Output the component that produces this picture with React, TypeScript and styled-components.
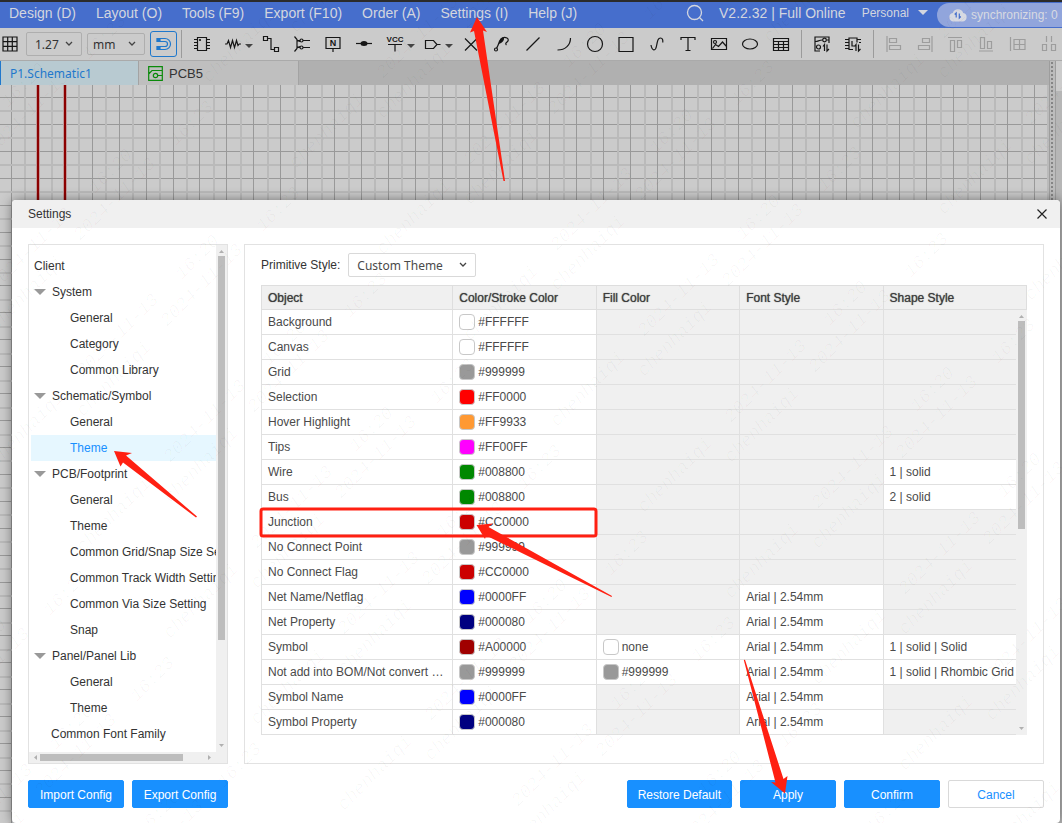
import React from "react";
import styled, { createGlobalStyle } from "styled-components";

const UI = `"Liberation Sans", Arial, sans-serif`;
const ALT = `"Noto Sans", "Open Sans", sans-serif`;
const BLUE = "#1890ff";
const RED = "#ff2012";

const GlobalStyle = createGlobalStyle`
  *, *::before, *::after { box-sizing: border-box; }
  body { margin: 0; font-family: ${UI}; font-size: 12px; color: #333; }
  button, select { font-family: inherit; font-size: inherit; color: inherit; }
  button { padding: 0; border: 0; background: none; cursor: pointer; }
  svg { display: block; flex: none; }
`;

const Page = styled.div`
  position: relative;
  display: flex;
  flex-direction: column;
  min-height: 100vh;
  overflow: hidden;
  background: #cbcbcb;
`;

/* ---------- menu bar ---------- */
const MenuBar = styled.header`
  display: flex;
  align-items: center;
  height: 28px;
  border-top: 2px solid #2b2b2b;
  padding: 0 0 5px 9px;
  background: #466ecc;
  color: #d3d6df;
  font-size: 14px;
  white-space: nowrap;
  overflow: hidden;
`;
const MenuList = styled.nav`
  display: flex;
  gap: 20px;
  flex: 1;
`;
const MenuButton = styled.button`
  line-height: 20px;
`;
const Version = styled.span`
  margin: 0 16px 0 15px;
`;
const Account = styled.button`
  display: flex;
  align-items: center;
  gap: 9px;
  margin-right: 9px;
  font-size: 12px;
`;
const SyncPill = styled.div`
  display: flex;
  align-items: center;
  gap: 4px;
  width: 125px;
  height: 24px;
  margin-top: 4px;
  padding: 1px 0 0 12px;
  border-radius: 12px 0 0 12px;
  background: #91a5dc;
  color: #d8dae2;
  font-size: 12px;
`;

/* ---------- tool bar ---------- */
const ToolBar = styled.div`
  display: flex;
  align-items: center;
  height: 33px;
  border-bottom: 1px solid #aaa;
  background: #cbcbcb;
  overflow: hidden;
`;
const Tool = styled.button<{ $caret?: boolean; $dim?: boolean }>`
  display: flex;
  align-items: center;
  gap: 4px;
  flex: none;
  width: ${(p) => (p.$caret ? 38 : 31)}px;
  height: 26px;
  padding-left: 7px;
  color: ${(p) => (p.$dim ? "#9d9d9d" : "#161616")};
`;
const Caret = styled.span`
  padding-top: 4px;
  color: #444;
`;
const GridTool = styled(Tool)`
  width: 26px;
  padding-left: 2px;
`;
const SnapTool = styled.button`
  display: grid;
  place-items: center;
  flex: none;
  width: 27px;
  height: 26px;
  border: 1px solid #1f78cc;
  border-radius: 3px;
  color: #1f78cc;
`;
const Pickers = styled.div`
  display: flex;
  align-items: center;
  gap: 5px;
`;
const Divider = styled.span`
  flex: none;
  width: 1px;
  height: 28px;
  margin: 0 5px 0 4px;
  background: #9b9b9b;
`;
const SelectBox = styled.span<{ $w: number; $h: number }>`
  display: grid;
  align-items: center;
  flex: none;
  width: ${(p) => p.$w}px;
  height: ${(p) => p.$h}px;
  svg { grid-area: 1 / 1; justify-self: end; margin-right: 9px; pointer-events: none; }
`;
const ToolSelect = styled.select<{ $pad: number }>`
  grid-area: 1 / 1;
  width: 100%;
  height: 100%;
  padding: 0 0 0 ${(p) => p.$pad}px;
  border: 1px solid #aeaeae;
  border-radius: 2px;
  appearance: none;
  background: transparent;
  font-family: ${ALT};
  font-size: 12px;
`;
const ThemeSelect = styled(ToolSelect)`
  border-color: #d9d9d9;
  background: #fff;
  color: #4a4a4a;
`;

/* ---------- document tabs ---------- */
const TabBar = styled.div`
  display: flex;
  height: 24px;
  background: #b0b0b0;
`;
const Tab = styled.button<{ $active?: boolean }>`
  display: flex;
  align-items: center;
  gap: 6px;
  width: ${(p) => (p.$active ? 139 : 160)}px;
  padding-left: ${(p) => (p.$active ? 10 : 9)}px;
  border-right: 1px solid #a3a3a3;
  background: ${(p) => (p.$active ? "#b8cad1" : "#bfbfbf")};
  color: ${(p) => (p.$active ? "#1f78cc" : "#333")};
  font-family: ${(p) => (p.$active ? ALT : UI)};
  font-size: ${(p) => (p.$active ? 12 : 13)}px;
  box-shadow: ${(p) => (p.$active ? "inset 1px 0 #1f78cc" : "none")};
`;

/* ---------- canvas ---------- */
const Work = styled.main`
  display: flex;
  flex: 1;
`;
const Sheet = styled.div`
  flex: 1;
  min-width: 0;
  overflow: hidden;
  contain: size;
`;
const Splitter = styled.div`
  width: 7px;
  margin-top: -24px;
  border: 1px solid #9d9d9d;
  border-width: 0 1px;
  background: radial-gradient(circle at 2px 2px, #858585 1px, transparent 1px) 0 0 / 5px 4px #bcbcbc;
`;
const Track = styled.div`
  width: 6px;
  margin-top: -24px;
  background: linear-gradient(#cbcbcb 30px, #b6b6b6 30px);
`;

/* ---------- settings dialog ---------- */
const Dialog = styled.section`
  position: absolute;
  top: 200px;
  left: 12px;
  right: 2px;
  border-radius: 4px;
  background: #fff;
  box-shadow: 0 0 12px rgba(0, 0, 0, 0.45);
`;
const TitleBar = styled.div`
  display: flex;
  align-items: center;
  justify-content: space-between;
  height: 28px;
  padding: 0 12px 0 16px;
  border-radius: 4px 4px 0 0;
  background: #f0f0f0;
`;
const Title = styled.h2`
  margin: 0;
  font-size: 12px;
  font-weight: 400;
`;
const Panels = styled.div`
  display: flex;
  gap: 16px;
  padding: 16px;
  height: 552px;
`;
const TreePanel = styled.nav`
  display: grid;
  grid-template: minmax(0, 1fr) 11px / minmax(0, 1fr) 11px;
  flex: none;
  width: 200px;
  border: 1px solid #e2e2e2;
`;
const Tree = styled.ul`
  margin: 0;
  padding: 8px 0 0 2px;
  list-style: none;
  overflow: hidden;
`;
const TreeRow = styled.button<{ $pad: number; $on?: boolean }>`
  display: flex;
  align-items: center;
  gap: 6px;
  width: 100%;
  height: 26px;
  padding-left: ${(p) => p.$pad}px;
  background: ${(p) => (p.$on ? "#e6f7ff" : "transparent")};
  color: ${(p) => (p.$on ? BLUE : "#333")};
  white-space: nowrap;
`;
const VBar = styled.div`
  display: flex;
  flex-direction: column;
  align-items: center;
  justify-content: space-between;
  padding: 5px 0;
  background: #f0f0f0;
`;
const HBar = styled.div`
  display: flex;
  grid-column: 1 / 3;
  align-items: center;
  padding: 0 15px 0 4px;
  background: #f0f0f0;
`;
const Thumb = styled.span<{ $size: number; $across?: boolean }>`
  width: ${(p) => (p.$across ? p.$size : 7)}px;
  height: ${(p) => (p.$across ? 7 : p.$size)}px;
  margin: ${(p) => (p.$across ? "0 auto 0 3px" : "3px 0 auto")};
  background: #bdbdbd;
`;
const MainPanel = styled.div`
  flex: 1;
  min-width: 0;
  padding: 8px 16px;
  border: 1px solid #e2e2e2;
`;
const StyleLine = styled.div`
  display: flex;
  align-items: center;
  gap: 8px;
  height: 24px;
  margin-bottom: 8px;
`;
const TableArea = styled.div`
  position: relative;
`;
const Table = styled.table`
  width: 100%;
  table-layout: fixed;
  border-collapse: collapse;
  color: #4a4a4a;
`;
const Th = styled.th`
  height: 24px;
  padding: 0 6px;
  border: 1px solid #dedede;
  background: #f0f0f0;
  color: #3c3c3c;
  text-align: left;
  font-weight: 400;
  text-shadow: 0 0 1px #555;
  &:first-child { width: 25%; }
`;
const Td = styled.td<{ $off?: boolean }>`
  height: 25px;
  padding: 0 6px;
  border: 1px solid #e0e0e0;
  background: ${(p) => (p.$off ? "#f0f0f0" : "#fff")};
  white-space: nowrap;
  overflow: hidden;
  text-overflow: ellipsis;
`;
const ColorValue = styled.span`
  display: flex;
  align-items: center;
  gap: 3px;
`;
const Swatch = styled.i<{ $color: string }>`
  width: 16px;
  height: 16px;
  border: 1px solid #c8c8c8;
  border-radius: 4px;
  background: ${(p) => p.$color};
`;
const TableBar = styled(VBar)`
  position: absolute;
  top: 25px;
  right: 0;
  bottom: 0;
  width: 11px;
`;
const Footer = styled.footer`
  display: flex;
  gap: 8px;
  padding: 0 16px 15px;
`;
const Btn = styled.button<{ $plain?: boolean }>`
  min-width: 96px;
  height: 28px;
  padding: 2px 10px 0;
  border: 1px solid ${(p) => (p.$plain ? "#d9d9d9" : BLUE)};
  border-radius: 2px;
  background: ${(p) => (p.$plain ? "#fff" : BLUE)};
  color: ${(p) => (p.$plain ? BLUE : "#fff")};
`;
const Gap = styled.span`
  flex: 1;
`;
const Overlay = styled.svg`
  position: absolute;
  top: 0;
  left: 0;
  width: 100%;
  height: 100%;
  pointer-events: none;
`;

/* ---------- drawings ---------- */
const icons: Record<string, React.ReactNode> = {
  grid: <path d="M1 1h14v14H1zM1 5.7h14M1 10.3h14M5.7 1v14M10.3 1v14" />,
  chip: (
    <>
      <path d="M3.5 1.5h9v13h-9zM0 3.5h3M0 6.5h3M0 9.5h3M0 12.5h3M13 3.5h3M13 6.5h3M13 9.5h3M13 12.5h3" />
      <circle cx="6" cy="4" r=".5" />
    </>
  ),
  resistor: <path d="M0 8h2l1.5-3.500 2 7 2-7 2 7 2-7 1.500 5L14.200 8H16" />,
  wire: <path d="M.5.500h4v4h-4zM11.500 11.500h4v4h-4zM4.500 2.500h3.500v11h3.500" />,
  bus: (
    <>
      <path d="M.5.500l2.500 3v9l-2.500 3M3 4.500h3M3 11.500h3M9 4.500h7M9 11.500h7M3 4.500l3 1M3 11.500l3-1" />
      <circle cx="7.500" cy="4.500" r="1.500" />
      <circle cx="7.500" cy="11.500" r="1.500" />
    </>
  ),
  net: (
    <>
      <path d="M1 1.500h14v11H1zM8 12.500V16" />
      <text x="8" y="10" fontSize="9" fontWeight="700" textAnchor="middle" fill="currentColor" stroke="none">N</text>
    </>
  ),
  dot: (
    <>
      <path d="M0 7.500h16" />
      <ellipse cx="8" cy="7.500" rx="3.500" ry="2.500" fill="currentColor" stroke="none" />
    </>
  ),
  vcc: (
    <>
      <path d="M1 8.500h14M8 8.500V15.500" />
      <text x="8" y="6" fontSize="8" fontWeight="700" textAnchor="middle" fill="currentColor" stroke="none">VCC</text>
    </>
  ),
  port: <path d="M.5 4.500h8L12 8.500l-3.500 4h-8zM12 8.500h3.500" />,
  cross: <path d="M2 2.500l12 12M14 2.500l-12 12" />,
  probe: (
    <>
      <path d="M2.300 12.500C5 11 4.500 5 7 2.500c1-1.200 2.500-1.200 3-.5.500 1-1 5-4.500 5.500z" fill="currentColor" stroke="none" />
      <path d="M2.500 12c2-2 2-6 4.500-9 1.500-1.500 4-2 6-1 2 1.200 1.500 3-.5 4.500-1 .8-1 1.500 0 2.500" />
      <circle cx="2" cy="13.500" r="1.500" />
    </>
  ),
  line: <path d="M1.500 14.500l13-13" />,
  arc: <path d="M14.500 2c0 7-5 12-13 12" />,
  circle: <circle cx="8" cy="8" r="7.500" />,
  rect: <path d="M1 1.500h14v14H1z" />,
  curve: <path d="M2 9c1 6 4.500 6.500 5.500 1s1.500-8 4-8c2 0 2.500 2 2.300 4.500" />,
  text: <path d="M1 4V1.500h14V4M8 1.500v13M5.500 14.500h5" />,
  image: (
    <>
      <path d="M.5 2.500h15v11H.5zM1.500 12.500l3-4 3 2 4-4.500 4 4.500" />
      <circle cx="4" cy="6" r="1.500" />
    </>
  ),
  ellipse: <ellipse cx="8" cy="8" rx="7.500" ry="5" />,
  table: <path d="M.5 2.500h15v12H.5zM.5 5.500h15M.5 8.500h15M.5 11.500h15M5.500 5.500v9M10.500 5.500v9" />,
  pcbSync: (
    <>
      <path d="M1 7V1h14v6M1 1v14h5M1.500 5.500c3 0 3-1.500 7-1.500M12.500 4H15M10.500 15V8.500L9 10.500M13 8.500V15l2-2" />
      <circle cx="10.500" cy="4" r="1.800" />
      <circle cx="4.500" cy="11" r="2" />
    </>
  ),
  chipSync: (
    <path d="M8 13.500H4V2h8v4.500M0 3.500h4M0 6.500h4M0 9.500h4M0 12.500h4M12 3.500h4M14 6.500h2M7 5v5h3M11 15V8.500L9.500 10.500M13.500 8.500V15l2-2" />
  ),
  alignL: <path d="M1 0v16M3.500 2.500h7v4h-7zM3.500 9.500h11v4h-11z" />,
  alignR: <path d="M15 0v16M5.500 2.500h7v4h-7zM1.500 9.500h11v4h-11z" />,
  alignT: <path d="M0 1.500h14M2.500 4.500h4v11h-4zM9.500 4.500h4v7h-4z" />,
  alignB: <path d="M0 15h14M1.500 1.500h4v11h-4zM8.500 5.500h4v7h-4z" />,
  alignG: <path d="M.5 1v14M4 3.500h11v10H4zM4 8.500h11M9.500 3.500v10" />,
  spread: <path d="M5.500 0v6M10.500 0v6M1.500 8.500h4v6h-4zM10.500 8.500h4v6h-4z" />,
};

const Icon = ({ name }: { name: string }) => (
  <svg width="16" height="16" viewBox="0 0 16 16" fill="none" stroke="currentColor" strokeWidth="1.200" overflow="visible" aria-hidden="true">
    {icons[name]}
  </svg>
);
const Down = ({ w = 8, h = 4, color = "currentColor" }) => (
  <svg width={w} height={h} viewBox="0 0 8 4" preserveAspectRatio="none" aria-hidden="true">
    <path d="M0 0h8L4 4z" fill={color} />
  </svg>
);
const Up = () => (
  <svg width="5" height="3" viewBox="0 0 5 3" aria-hidden="true"><path d="M0 3h5L2.500 0z" fill="#b0b0b0" /></svg>
);
const Side = ({ flip }: { flip?: boolean }) => (
  <svg width="4" height="5" viewBox="0 0 4 5" aria-hidden="true">
    <path d={flip ? "M0 0v5l3-2.500z" : "M4 0v5L1 2.500z"} fill="#b0b0b0" />
  </svg>
);
const Chevron = () => (
  <svg width="8" height="6" viewBox="0 0 8 6" fill="none" stroke="#444" strokeWidth="1.300" aria-hidden="true">
    <path d="M1 1l3 3 3-3" />
  </svg>
);

/* ---------- data ---------- */
const menus = ["Design (D)", "Layout (O)", "Tools (F9)", "Export (F10)", "Order (A)", "Settings (I)", "Help (J)"];

type ToolItem = [icon: string, label: string, caret?: boolean];
const placeTools: ToolItem[] = [
  ["chip", "Device"], ["resistor", "Common parts", true], ["wire", "Wire"], ["bus", "Bus"], ["net", "Net label"],
  ["dot", "Junction"], ["vcc", "Power flag", true], ["port", "Net port", true], ["cross", "No connect"], ["probe", "Probe"],
  ["line", "Line"], ["arc", "Arc"], ["circle", "Circle"], ["rect", "Rectangle"], ["curve", "Bezier"], ["text", "Text"],
  ["image", "Image"], ["ellipse", "Ellipse"], ["table", "Table"],
];
const syncTools: ToolItem[] = [["pcbSync", "Update PCB"], ["chipSync", "Update schematic"]];
const alignTools: ToolItem[] = [
  ["alignL", "Align left"], ["alignR", "Align right"], ["alignT", "Align top"],
  ["alignB", "Align bottom"], ["alignG", "Align to grid"], ["spread", "Distribute"],
];

type Level = "root" | "group" | "child" | "leaf";
const padOf: Record<Level, number> = { root: 3, group: 3, child: 39, leaf: 20 };
const tree: [string, Level, boolean?][] = [
  ["Client", "root"], ["System", "group"], ["General", "child"], ["Category", "child"], ["Common Library", "child"],
  ["Schematic/Symbol", "group"], ["General", "child"], ["Theme", "child", true],
  ["PCB/Footprint", "group"], ["General", "child"], ["Theme", "child"], ["Common Grid/Snap Size Setting", "child"],
  ["Common Track Width Setting", "child"], ["Common Via Size Setting", "child"], ["Snap", "child"],
  ["Panel/Panel Lib", "group"], ["General", "child"], ["Theme", "child"], ["Common Font Family", "leaf"],
];

const FONT = "Arial | 2.54mm";
type Row = { name: string; color: string; fill?: string; font?: string; shape?: string };
const rows: Row[] = [
  { name: "Background", color: "#FFFFFF" },
  { name: "Canvas", color: "#FFFFFF" },
  { name: "Grid", color: "#999999" },
  { name: "Selection", color: "#FF0000" },
  { name: "Hover Highlight", color: "#FF9933" },
  { name: "Tips", color: "#FF00FF" },
  { name: "Wire", color: "#008800", shape: "1 | solid" },
  { name: "Bus", color: "#008800", shape: "2 | solid" },
  { name: "Junction", color: "#CC0000" },
  { name: "No Connect Point", color: "#999999" },
  { name: "No Connect Flag", color: "#CC0000" },
  { name: "Net Name/Netflag", color: "#0000FF", font: FONT },
  { name: "Net Property", color: "#000080", font: FONT },
  { name: "Symbol", color: "#A00000", fill: "none", font: FONT, shape: "1 | solid | Solid" },
  { name: "Not add into BOM/Not convert to PCB", color: "#999999", fill: "#999999", font: FONT, shape: "1 | solid | Rhombic Grid" },
  { name: "Symbol Name", color: "#0000FF", font: FONT },
  { name: "Symbol Property", color: "#000080", font: FONT },
];

/* Security watermark: each mark repeats on the same slanted lattice. */
const marks: [string, number, number][] = [
  ["16:20", 182, 280], ["16:23", 350, 318],
  ["2024-11-13", 167, 327], ["2024-11-13", 83, 377],
  ["chenhaiqi", 83, 417], ["chenhaiqi", 83, 553],
];
const watermark = marks.flatMap(([text, x0, y0]) => {
  const out: { text: string; x: number; y: number }[] = [];
  for (let a = -14; a < 15; a++)
    for (let b = -5; b < 6; b++) {
      const x = x0 + a * 87 + b * 300;
      const y = y0 + a * 86 - b * 298;
      if (x > -60 && x < 1050 && y > 10 && y < 890) out.push({ text, x, y });
    }
  return out;
});

const gridLines = Array.from({ length: 180 }, (_, i) => ({ at: Math.round(11 + i * 13.46), bold: i % 2 === 1 }));

const ToolGroup = ({ items, dim }: { items: ToolItem[]; dim?: boolean }) => (
  <>
    {items.map(([icon, label, caret]) => (
      <Tool key={icon} aria-label={label} $caret={caret} $dim={dim}>
        <Icon name={icon} />
        {caret && <Caret><Down /></Caret>}
      </Tool>
    ))}
  </>
);
const ColorCell = ({ value }: { value: string }) => (
  <ColorValue>
    <Swatch $color={value === "none" ? "#fff" : value} />
    {value}
  </ColorValue>
);

export default function App() {
  return (
    <Page>
      <GlobalStyle />
      <MenuBar>
        <MenuList>
          {menus.map((m) => <MenuButton key={m}>{m}</MenuButton>)}
        </MenuList>
        <svg width="18" height="18" viewBox="0 0 18 18" fill="none" stroke="currentColor" strokeWidth="1.300" aria-hidden="true">
          <circle cx="8.500" cy="8.500" r="7" /><path d="M13.500 13.500l3.500 3.500" />
        </svg>
        <Version>V2.2.32 | Full Online</Version>
        <Account>Personal <Down w={10} h={5} /></Account>
        <SyncPill>
          <svg width="18" height="14" viewBox="0 0 18 14" aria-hidden="true">
            <path d="M4.500 13.500A4.300 4.300 0 0 1 3.800 5 5.500 5.500 0 0 1 14.200 5a4.300 4.300 0 0 1-.7 8.500z" fill="currentColor" />
            <path d="M7.200 9.500V5L5.700 6.500M10.300 5.500V10l1.500-1.500" fill="none" stroke="#466ecc" strokeWidth="1.200" />
          </svg>
          synchronizing: 0
        </SyncPill>
      </MenuBar>

      <ToolBar>
        <GridTool aria-label="Grid"><Icon name="grid" /></GridTool>
        <Pickers>
          <SelectBox $w={56} $h={24}>
            <ToolSelect $pad={8} aria-label="Grid size"><option>1.27</option></ToolSelect>
            <Chevron />
          </SelectBox>
          <SelectBox $w={58} $h={22}>
            <ToolSelect $pad={5} aria-label="Unit"><option>mm</option></ToolSelect>
            <Chevron />
          </SelectBox>
          <SnapTool aria-label="Snap">
            <svg width="16" height="14" viewBox="0 0 16 14" fill="none" stroke="currentColor" strokeWidth="1.200" aria-hidden="true">
              <path d="M1.500 1.500H9a5.500 5.500 0 0 1 0 11H1.500v-3H9a2.500 2.500 0 0 0 0-5H1.500z" />
              <path d="M1 1.500h3v3H1zM1 9.500h3v3H1z" fill="currentColor" />
            </svg>
          </SnapTool>
        </Pickers>
        <Divider />
        <ToolGroup items={placeTools} />
        <Divider />
        <ToolGroup items={syncTools} />
        <Divider />
        <ToolGroup items={alignTools} dim />
      </ToolBar>

      <TabBar>
        <Tab $active>P1.Schematic1</Tab>
        <Tab>
          <svg width="15" height="15" viewBox="0 0 15 15" fill="none" stroke="#0a8a0a" strokeWidth="1.200" aria-hidden="true">
            <path d="M.7.700h13.600v13.600H.7zM.7 8L4 4.500h10M10 9.500h4" /><circle cx="7.500" cy="9.500" r="2.200" />
          </svg>
          PCB5
        </Tab>
      </TabBar>

      <Work>
        <Sheet>
          <svg width="100%" height="100%" shapeRendering="crispEdges" aria-hidden="true">
            {gridLines.map(({ at, bold }) => (
              <g key={at} fill={bold ? "#bababa" : "#999"}>
                <rect x={at} y="0" width={bold ? 2 : 1} height="100%" />
                <rect x="0" y={at + 1} width="100%" height={bold ? 2 : 1} />
              </g>
            ))}
            <path d="M38 0v400M65 0v400" stroke="#c09a9a" strokeWidth="4" />
            <path d="M38 0v400M65 0v400" stroke="#8b0000" strokeWidth="2" />
          </svg>
        </Sheet>
        <Splitter />
        <Track />
      </Work>

      <Dialog role="dialog" aria-label="Settings">
        <TitleBar>
          <Title>Settings</Title>
          <button aria-label="Close">
            <svg width="12" height="12" viewBox="0 0 12 12" stroke="#222" strokeWidth="1.200" aria-hidden="true">
              <path d="M1.500 1.500l9 9M10.500 1.500l-9 9" />
            </svg>
          </button>
        </TitleBar>
        <Panels>
          <TreePanel aria-label="Settings sections">
            <Tree>
              {tree.map(([label, level, on], i) => (
                <li key={i}>
                  <TreeRow $pad={padOf[level]} $on={on}>
                    {level === "group" && <Down w={12} h={6} color="#999" />}
                    {label}
                  </TreeRow>
                </li>
              ))}
            </Tree>
            <VBar><Up /><Thumb $size={384} /><Down w={5} h={3} color="#b0b0b0" /></VBar>
            <HBar><Side /><Thumb $size={143} $across /><Side flip /></HBar>
          </TreePanel>
          <MainPanel>
            <StyleLine>
              <label htmlFor="primitive-style">Primitive Style:</label>
              <SelectBox $w={128} $h={24}>
                <ThemeSelect id="primitive-style" $pad={8}><option>Custom Theme</option></ThemeSelect>
                <Chevron />
              </SelectBox>
            </StyleLine>
            <TableArea>
              <Table>
                <thead>
                  <tr>
                    {["Object", "Color/Stroke Color", "Fill Color", "Font Style", "Shape Style"].map((h) => <Th key={h}>{h}</Th>)}
                  </tr>
                </thead>
                <tbody>
                  {rows.map((r) => (
                    <tr key={r.name}>
                      <Td>{r.name}</Td>
                      <Td><ColorCell value={r.color} /></Td>
                      <Td $off={!r.fill}>{r.fill && <ColorCell value={r.fill} />}</Td>
                      <Td $off={!r.font}>{r.font}</Td>
                      <Td $off={!r.shape}>{r.shape}</Td>
                    </tr>
                  ))}
                </tbody>
              </Table>
              <TableBar><Up /><Thumb $size={208} /><Down w={5} h={3} color="#b0b0b0" /></TableBar>
            </TableArea>
          </MainPanel>
        </Panels>
        <Footer>
          <Btn>Import Config</Btn>
          <Btn>Export Config</Btn>
          <Gap />
          <Btn>Restore Default</Btn>
          <Btn>Apply</Btn>
          <Btn>Confirm</Btn>
          <Btn $plain>Cancel</Btn>
        </Footer>
      </Dialog>

      <Overlay aria-hidden="true">
        <g fill="#000" fillOpacity="0.03" fontFamily="Liberation Mono, monospace" fontStyle="italic" fontSize="18">
          {watermark.map((w, i) => (
            <text key={i} transform={`translate(${w.x} ${w.y}) rotate(-45)`}>{w.text}</text>
          ))}
        </g>
        <rect x="261" y="509" width="335" height="27" rx="2" fill="none" stroke={RED} strokeWidth="3" />
        <g fill={RED}>
          <path d="M477 17L487 32L483 30.500L505 181L503.500 181L474 31L470 32.500Z" />
          <path d="M114 451L132 453L126 455.500L197 516.500L196 517.500L123 462.500L120.500 466.500Z" />
          <path d="M476.500 525L493 523.500L488.500 527L612 596L611.500 597L486 535.500L485 539Z" />
          <path d="M785 793.500L771 782L775.500 782.500L743.800 660L745 659.800L783.500 779L787.500 776Z" />
        </g>
      </Overlay>
    </Page>
  );
}
